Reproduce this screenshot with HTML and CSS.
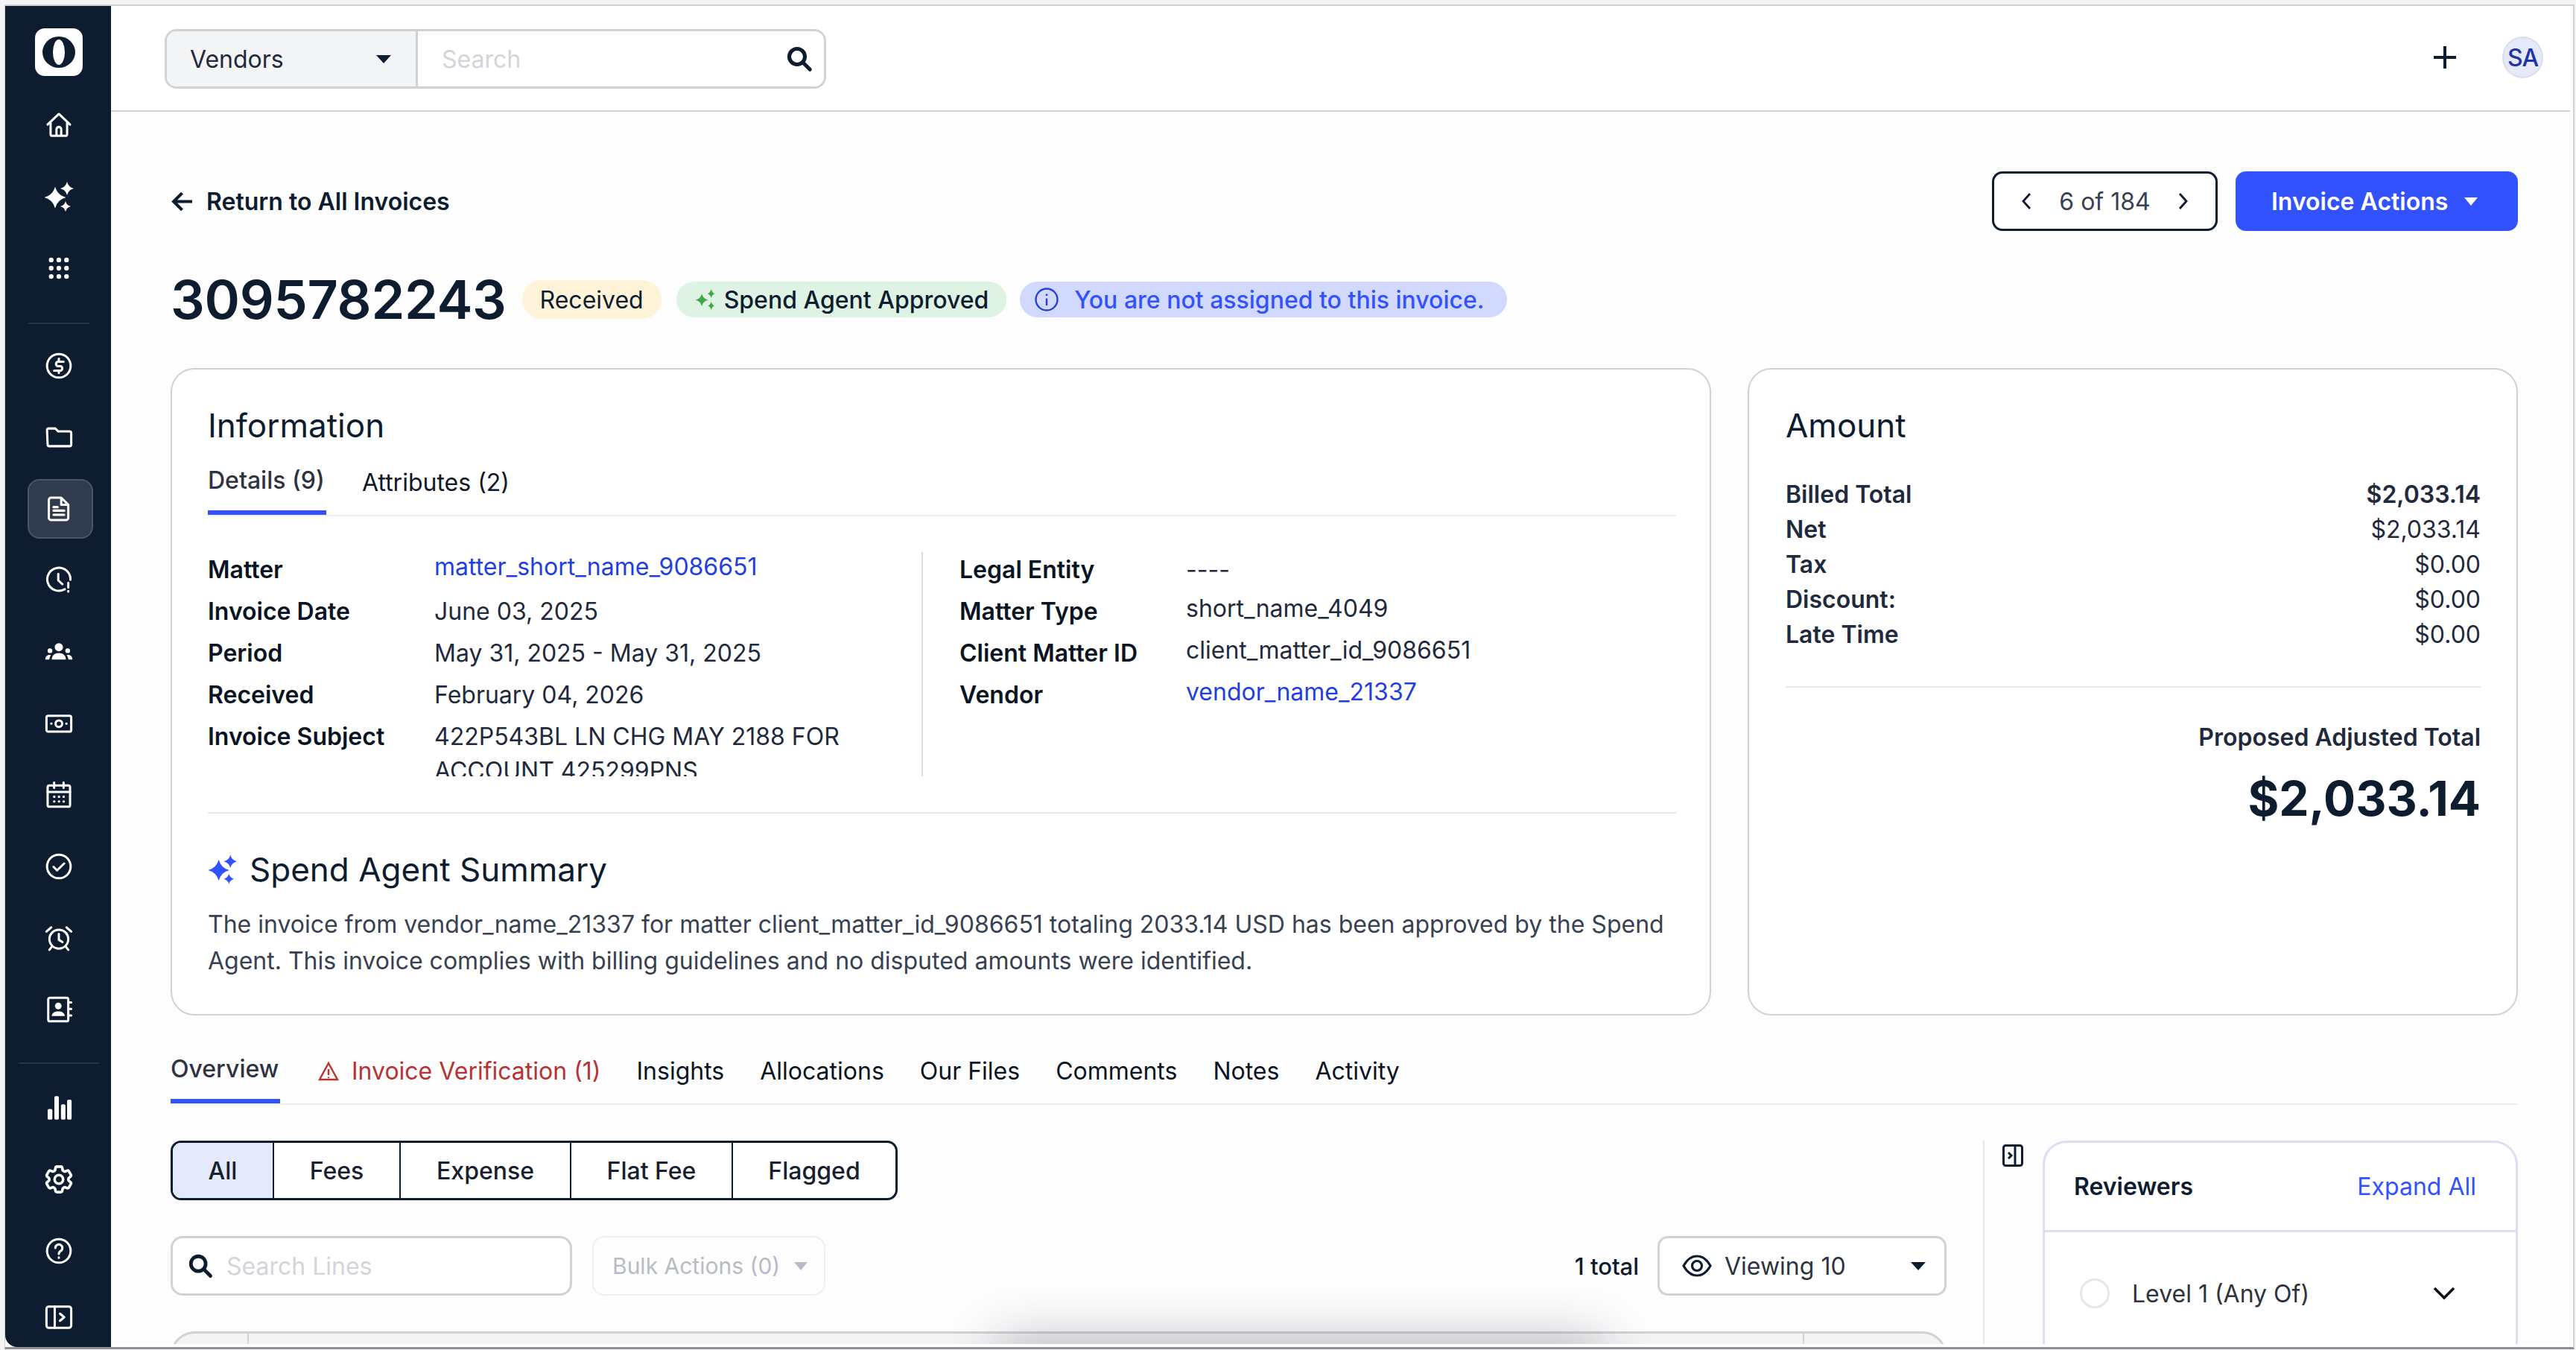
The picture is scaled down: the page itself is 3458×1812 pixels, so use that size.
FILE: index.html
```html
<!DOCTYPE html>
<html lang="en">
<head>
<meta charset="utf-8">
<title>Invoice 3095782243</title>
<link rel="stylesheet" href="styles.css">
</head>
<body>
<div class="window">
  <nav class="sidebar">
    <div class="logo"><svg width="48" height="44" viewBox="0 0 48 44"><ellipse cx="24" cy="22" rx="22" ry="21" fill="#0e1c2f"/><ellipse cx="24" cy="22" rx="8" ry="17" fill="#fff"/></svg></div>
    <a class="nav-item"><svg class="ni" viewBox="0 0 24 24"><path d="M2.500 11.500 12 2.500l9.500 9M5 10v9.500a1.500 1.500 0 0 0 1.500 1.500h11a1.500 1.500 0 0 0 1.500-1.500V10M10 21v-5.500a2 2 0 0 1 4 0V21"/></svg></a>
    <a class="nav-item"><svg class="ni big" viewBox="0 0 40 40"><g class="f"><path d="M15 6.500Q18 18 29.500 21 18 24 15 35.500 12 24 .5 21 12 18 15 6.500Z"/><path d="M31 0Q32.800 7.200 40 9 32.800 10.800 31 18 29.200 10.800 22 9 29.200 7.200 31 0Z"/><path d="M29 26Q30.400 31.600 36 33 30.400 34.400 29 40 27.600 34.400 22 33 27.600 31.600 29 26Z"/></g></svg></a>
    <a class="nav-item"><svg class="ni" viewBox="0 0 24 24"><g class="f"><circle cx="5.500" cy="5" r="2"/><circle cx="12" cy="5" r="2"/><circle cx="18.500" cy="5" r="2"/><circle cx="5.500" cy="12" r="2"/><circle cx="12" cy="12" r="2"/><circle cx="18.500" cy="12" r="2"/><circle cx="5.500" cy="19" r="2"/><circle cx="12" cy="19" r="2"/><circle cx="18.500" cy="19" r="2"/></g></svg></a>
    <div class="nav-sep"></div>
    <a class="nav-item"><svg class="ni" viewBox="0 0 24 24"><circle cx="12" cy="12" r="10"/><path d="M16 8.500h-5a2 2 0 0 0 0 3.800h2.500a2 2 0 0 1 0 3.800H8M12 6v2.500M12 16v2"/></svg></a>
    <a class="nav-item"><svg class="ni" viewBox="0 0 24 24"><path d="M2 6a1.500 1.500 0 0 1 1.500-1.500h5.500l2.500 2.500h9.500a1.500 1.500 0 0 1 1.500 1.500v9.500a1.500 1.500 0 0 1-1.500 1.500h-17a1.500 1.500 0 0 1-1.500-1.500Z"/></svg></a>
    <a class="nav-item active"><svg class="ni" viewBox="0 0 24 24"><path d="M5.500 2.500H14l6 6V19.500a2 2 0 0 1-2 2H5.500a2 2 0 0 1-2-2V4.500a2 2 0 0 1 2-2ZM14 2.500V8.500H20M7.500 10.500h3.500M7.500 13.500h9M7.500 17h9"/></svg></a>
    <a class="nav-item"><svg class="ni" viewBox="0 0 24 24"><path d="M17 19.500A9.800 9.800 0 1 1 21.800 11.500M11.500 6.500v5.500l3.500 3.200M20 14v4M20 21v.4"/></svg></a>
    <a class="nav-item"><svg class="ni" viewBox="0 0 24 24"><g class="f"><circle cx="12" cy="8" r="3.500"/><circle cx="4.500" cy="11" r="2"/><circle cx="19.500" cy="11" r="2"/><path d="M6 18.500c0-3.500 2.500-5.500 6-5.500s6 2 6 5.500ZM0.500 18.500c0-2.500 1.500-4 3.500-4 .5 0 1 .1 1.300.3-.8 1-1.300 2.300-1.300 3.700ZM23.500 18.500c0-2.500-1.500-4-3.500-4-.5 0-1 .1-1.300.3.8 1 1.300 2.300 1.300 3.700Z"/></g></svg></a>
    <a class="nav-item"><svg class="ni" viewBox="0 0 24 24"><rect x="1.500" y="5.500" width="21" height="13.500" rx="1.500"/><circle cx="12" cy="12.200" r="2.800"/><path d="M5.500 12.200h.2M18.300 12.200h.2"/></svg></a>
    <a class="nav-item"><svg class="ni" viewBox="0 0 24 24"><rect x="2.500" y="4" width="19" height="18" rx="1.500"/><path d="M2.500 9.500h19M8 1.500V6M16 1.500V6M8 13.500h.2M12 13.500h.2M16 13.500h.2M8 17.500h.2M12 17.500h.2M16 17.500h.2"/></svg></a>
    <a class="nav-item"><svg class="ni" viewBox="0 0 24 24"><circle cx="12" cy="12" r="10"/><path d="m7.500 12.300 3 3 6-5.800"/></svg></a>
    <a class="nav-item"><svg class="ni" viewBox="0 0 24 24"><circle cx="12" cy="13" r="8"/><path d="M12 8.500V13.500l3 2M1.500 6.500 5.500 3M22.500 6.500 18.500 3M6 19.500l-2 2.500M18 19.500l2 2.500"/></svg></a>
    <a class="nav-item"><svg class="ni" viewBox="0 0 24 24"><path d="M4.500 2h14a1.500 1.500 0 0 1 1.500 1.500v17a1.500 1.500 0 0 1-1.500 1.500h-14a1.500 1.500 0 0 1-1.500-1.500v-17A1.500 1.500 0 0 1 4.500 2ZM20 6h2.500M20 11.500h2.500M20 17h2.500"/><g class="f"><circle cx="11.500" cy="9" r="2.800"/><path d="M6 17.500c0-2.800 2.500-4 5.500-4s5.500 1.200 5.500 4Z"/></g></svg></a>
    <div class="nav-sep lower"></div>
    <a class="nav-item"><svg class="ni" viewBox="0 0 24 24"><g class="f"><rect x="2.500" y="13" width="4" height="9" rx="1.200"/><rect x="8.200" y="2" width="3.800" height="20" rx="1.200"/><rect x="13.800" y="9" width="3.800" height="13" rx="1.200"/><rect x="19" y="5" width="3.800" height="17" rx="1.200"/></g></svg></a>
    <a class="nav-item"><svg class="ni" viewBox="2 2 20 20"><circle cx="12" cy="12" r="3"/><path d="M9.594 3.940c.09-.542.56-.94 1.110-.94h2.593c.55 0 1.020.398 1.110.94l.213 1.281c.063.374.313.686.645.870.074.040.147.083.22.127.325.196.72.257 1.075.124l1.217-.456a1.125 1.125 0 0 1 1.370.49l1.296 2.247a1.125 1.125 0 0 1-.26 1.431l-1.003.827c-.293.241-.438.613-.43.992a7.723 7.723 0 0 1 0 .255c-.008.378.137.75.43.991l1.004.827c.424.35.534.955.26 1.430l-1.298 2.247a1.125 1.125 0 0 1-1.369.491l-1.217-.456c-.355-.133-.75-.072-1.076.124a6.470 6.470 0 0 1-.22.128c-.331.183-.581.495-.644.869l-.213 1.281c-.09.543-.56.94-1.110.94h-2.594c-.55 0-1.019-.398-1.110-.94l-.213-1.281c-.062-.374-.312-.686-.644-.87a6.520 6.520 0 0 1-.22-.127c-.325-.196-.72-.257-1.076-.124l-1.217.456a1.125 1.125 0 0 1-1.369-.49l-1.297-2.247a1.125 1.125 0 0 1 .26-1.431l1.004-.827c.292-.24.437-.613.43-.991a6.932 6.932 0 0 1 0-.255c.007-.38-.138-.751-.43-.992l-1.004-.827a1.125 1.125 0 0 1-.26-1.430l1.297-2.247a1.125 1.125 0 0 1 1.370-.491l1.216.456c.356.133.751.072 1.076-.124.072-.044.146-.086.22-.128.332-.183.582-.495.644-.869l.214-1.280Z"/></svg></a>
    <a class="nav-item"><svg class="ni" viewBox="0 0 24 24"><circle cx="12" cy="12" r="10"/><path d="M9 9.500a3 3 0 1 1 4.500 2.600c-1 .6-1.500 1.200-1.500 2.400M12 17.500v.3"/></svg></a>
    <a class="nav-item last"><svg class="ni" viewBox="0 0 24 24"><rect x="1.500" y="3" width="21" height="18" rx="2"/><path d="M8.500 3v18M13 9l3.500 3-3.500 3"/></svg></a>
  </nav>

  <div class="main">
    <header class="topbar">
      <div class="global-search">
        <div class="scope"><span>Vendors</span><i class="caret"></i></div>
        <div class="search-field"><span class="ph">Search</span>
          <svg class="mag" viewBox="0 0 24 24"><circle cx="10" cy="10" r="7"/><path d="m15.500 15.500 6 6"/></svg></div>
      </div>
      <div class="top-actions">
        <svg class="plus" viewBox="0 0 30 30"><path d="M15 0v30M0 15h30"/></svg>
        <div class="avatar">SA</div>
      </div>
    </header>

    <div class="content">
      <div class="crumb-row">
        <a class="back"><svg viewBox="0 0 28 28"><path d="M27 14H3M14 3 3 14l11 11"/></svg>Return to All Invoices</a>
        <div class="crumb-actions">
          <div class="pager">
            <svg viewBox="0 0 14 22"><path d="M12 1 3 11l9 10"/></svg>
            <span>6 of 184</span>
            <svg viewBox="0 0 14 22"><path d="m2 1 9 10-9 10"/></svg>
          </div>
          <button class="primary">Invoice Actions<i class="caret white"></i></button>
        </div>
      </div>

      <div class="title-row">
        <h1>3095782243</h1>
        <span class="badge yellow">Received</span>
        <span class="badge green"><svg viewBox="0 0 40 40"><path d="M13 9Q15.500 19 25 21 15.500 23 13 33 10.500 23 1 21 10.500 19 13 9Z"/><path d="M31 0Q32.800 7.200 38 9 32.800 10.800 31 17 29.200 10.800 24 9 29.200 7.200 31 0Z"/><path d="M31 24Q32.400 30 37 32 32.400 34 31 40 29.600 34 25 32 29.600 30 31 24Z"/></svg>Spend Agent Approved</span>
        <span class="badge blue"><svg viewBox="0 0 32 32"><circle cx="16" cy="16" r="14.500"/><path d="M16 14.500V24M16 8.500v2.500"/></svg>You are not assigned to this invoice.</span>
      </div>

      <div class="cards">
        <section class="card info">
          <h2>Information</h2>
          <div class="sub-tabs">
            <a class="sub-tab on">Details (9)</a>
            <a class="sub-tab">Attributes (2)</a>
          </div>
          <div class="fields">
            <div class="field-col left">
              <div class="f-label">Matter</div><div class="f-val link up">matter_short_name_9086651</div>
              <div class="f-label">Invoice Date</div><div class="f-val">June 03, 2025</div>
              <div class="f-label">Period</div><div class="f-val">May 31, 2025 - May 31, 2025</div>
              <div class="f-label">Received</div><div class="f-val">February 04, 2026</div>
              <div class="f-label">Invoice Subject</div><div class="f-val wrap">422P543BL LN CHG MAY 2188 FOR ACCOUNT 425299PNS</div>
            </div>
            <div class="field-col right">
              <div class="f-label">Legal Entity</div><div class="f-val">----</div>
              <div class="f-label">Matter Type</div><div class="f-val up">short_name_4049</div>
              <div class="f-label">Client Matter ID</div><div class="f-val up">client_matter_id_9086651</div>
              <div class="f-label">Vendor</div><div class="f-val link up">vendor_name_21337</div>
            </div>
          </div>
          <div class="summary">
            <h2 class="summary-title"><svg viewBox="0 0 40 40"><g fill="#3352ff"><path d="M15 6.500Q18 18 29.500 21 18 24 15 35.500 12 24 .5 21 12 18 15 6.500Z"/><path d="M31 0Q32.800 7.200 40 9 32.800 10.800 31 18 29.200 10.800 22 9 29.200 7.200 31 0Z"/><path d="M29 26Q30.400 31.600 36 33 30.400 34.400 29 40 27.600 34.400 22 33 27.600 31.600 29 26Z"/></g></svg>Spend Agent Summary</h2>
            <p>The invoice from vendor_name_21337 for matter client_matter_id_9086651 totaling 2033.14 USD has been approved by the Spend Agent. This invoice complies with billing guidelines and no disputed amounts were identified.</p>
          </div>
        </section>

        <section class="card amount">
          <h2>Amount</h2>
          <div class="amount-rows">
            <div class="a-row strong"><span>Billed Total</span><span>$2,033.14</span></div>
            <div class="a-row"><b>Net</b><span>$2,033.14</span></div>
            <div class="a-row"><b>Tax</b><span>$0.00</span></div>
            <div class="a-row"><b>Discount:</b><span>$0.00</span></div>
            <div class="a-row"><b>Late Time</b><span>$0.00</span></div>
          </div>
          <div class="adjusted">
            <div class="adj-label">Proposed Adjusted Total</div>
            <div class="adj-value">$2,033.14</div>
          </div>
        </section>
      </div>

      <div class="tabs">
        <a class="tab on">Overview</a>
        <a class="tab warn"><svg viewBox="0 0 28 28"><path d="M14 3 26 25H2ZM14 11v8M14 21.500v1.500"/></svg>Invoice Verification (1)</a>
        <a class="tab">Insights</a>
        <a class="tab">Allocations</a>
        <a class="tab">Our Files</a>
        <a class="tab">Comments</a>
        <a class="tab">Notes</a>
        <a class="tab">Activity</a>
      </div>

      <div class="lower-body">
        <div class="lines">
          <div class="segments">
            <a class="seg on">All</a><a class="seg">Fees</a><a class="seg">Expense</a><a class="seg">Flat Fee</a><a class="seg">Flagged</a>
          </div>
          <div class="toolbar">
            <div class="line-search"><svg class="mag" viewBox="0 0 24 24"><circle cx="10" cy="10" r="7"/><path d="m15.500 15.500 6 6"/></svg><span class="ph">Search Lines</span></div>
            <div class="bulk"><span>Bulk Actions (0)</span><i class="caret grey"></i></div>
            <div class="total">1 total</div>
            <div class="viewing"><svg viewBox="0 0 40 40"><path d="M2 20C7 11 13 7 20 7s13 4 18 13c-5 9-11 13-18 13S7 29 2 20Z"/><circle cx="20" cy="20" r="6.500"/></svg><span>Viewing 10</span><i class="caret"></i></div>
          </div>
          <div class="table-head"><div class="th first"></div><div class="th mid"></div><div class="th end"></div></div>
        </div>
        <aside class="side">
          <svg class="collapse" viewBox="0 0 28 30"><rect x="1.500" y="1.500" width="25" height="27" rx="3"/><path d="M17 1.500v27M8 11l4 4-4 4"/></svg>
          <div class="reviewers">
            <div class="rev-head"><strong>Reviewers</strong><a>Expand All</a></div>
            <div class="rev-row"><i class="radio"></i><span>Level 1 (Any Of)</span><svg viewBox="0 0 32 20"><path d="m3 3 13 13L29 3"/></svg></div>
          </div>
        </aside>
      </div>
      <div class="shadow"></div>
    </div>
  </div>
</div>
</body>
</html>
```
FILE: styles.css
```css
* { box-sizing: border-box; }
html, body { margin: 0; padding: 0; }
body {
  width: 3458px; height: 1812px; overflow: hidden;
  background: #f4f4f5;
  font-family: Inter, "Liberation Sans", sans-serif;
  font-size: 32px; color: #0e1c2f;
}
svg { display: block; flex: none; }
i { display: block; flex: none; }
h1, h2, p { margin: 0; font-weight: 400; }

.window {
  margin: 6px 0 0 6px; width: 3450px; height: 1805px;
  display: flex; overflow: hidden; background: #fff;
  border-top: 2px solid #d1d2d6; border-left: 1px solid #c9cacd;
  border-right: 2px solid #d1d2d6; border-bottom: 3px solid #8d8f93;
}

/* sidebar */
.sidebar {
  width: 142px; flex: none; height: 100%; background: #0e1c2f;
  border-bottom-left-radius: 16px;
  display: flex; flex-direction: column; align-items: center;
  padding: 30px 0 0 2px;
}
.logo {
  width: 64px; height: 64px; background: #fff; border-radius: 13px;
  display: flex; align-items: center; justify-content: center;
  margin-bottom: 26px;
}
.nav-item {
  width: 88px; height: 80px; margin-bottom: 16px;
  display: flex; align-items: center; justify-content: center;
  border: 2px solid transparent; border-radius: 16px; flex: none;
}
.nav-item.active { background: #303c4e; border-color: #4a5565; margin-left: 3px; padding-right: 3px; }
.nav-item.last { margin: -7px 0 0; }
.ni { width: 38px; height: 38px; fill: none; stroke: #fff; stroke-width: 1.9; stroke-linecap: round; stroke-linejoin: round; }
.ni.big { width: 40px; height: 40px; }
.ni .f { fill: #fff; stroke: none; }
.nav-sep { width: 82px; height: 2px; background: #26344a; flex: none; margin: 17px 0 16px; }
.nav-sep.lower { width: 108px; margin: 15px 0 19px; }

/* top bar */
.main { flex: 1; min-width: 0; display: flex; flex-direction: column; padding-right: 4px; }
.topbar {
  height: 142px; flex: none; border-bottom: 2px solid #d1d2d6;
  display: flex; align-items: center; justify-content: space-between;
  padding: 0 36px 2px 72px;
}
.global-search {
  width: 888px; height: 80px; margin-top: 4px; display: flex;
  border: 3px solid #d1d2d6; border-radius: 16px; overflow: hidden;
}
.scope {
  width: 337px; flex: none; background: #f3f4f6; border-right: 3px solid #d1d2d6;
  display: flex; align-items: center; justify-content: space-between;
  padding: 0 33px 0 31px; color: #1f2a3c;
}
.search-field { flex: 1; display: flex; align-items: center; justify-content: space-between; padding: 0 15px 0 32px; background: #fff; }
.ph { color: #d3d5da; }
.mag { width: 36px; height: 36px; fill: none; stroke: #0e1c2f; stroke-width: 3.400; stroke-linecap: round; }
.caret { width: 0; height: 0; border-left: 10px solid transparent; border-right: 10px solid transparent; border-top: 11px solid #0e1c2f; }
.caret.white { border-left-width: 9px; border-right-width: 9px; border-top-color: #fff; }
.caret.grey { border-top-color: #b8bcc6; }
.top-actions { display: flex; align-items: center; gap: 62px; }
.plus { width: 30px; height: 30px; fill: none; stroke: #0e1c2f; stroke-width: 4; }
.avatar {
  width: 55px; height: 56px; border-radius: 50%; background: #e5e9fc; border: 2px solid #dcdde3;
  display: flex; align-items: center; justify-content: center;
  font-size: 32px; font-weight: 500; letter-spacing: -1px; color: #1f33a6;
}

/* page */
.content {
  position: relative; height: 1654px; flex: none; overflow: hidden;
  background: #fdfdfe; padding: 80px 70px 0 80px;
}
.crumb-row { display: flex; align-items: center; justify-content: space-between; height: 80px; }
.back { display: flex; align-items: center; gap: 18px; font-weight: 600; padding-left: 1px; }
.back svg { width: 29px; height: 29px; fill: none; stroke: #0e1c2f; stroke-width: 4; }
.crumb-actions { display: flex; gap: 24px; }
.pager {
  width: 303px; height: 80px; border: 3px solid #0e1c2f; border-radius: 14px; background: #fff;
  display: flex; align-items: center; justify-content: space-between; padding: 0 36px; color: #374151;
}
.pager svg { width: 14px; height: 22px; fill: none; stroke: #0e1c2f; stroke-width: 2.800; }
.primary {
  width: 379px; height: 80px; border: 0; border-radius: 14px; background: #3352ff; color: #fff;
  font: 600 32px Inter, "Liberation Sans", sans-serif;
  display: flex; align-items: center; justify-content: flex-start; gap: 22px; padding: 0 0 0 48px;
}
.title-row { display: flex; align-items: center; height: 90px; margin: 47px 0; gap: 21px; }
h1 { font-size: 72px; font-weight: 600; line-height: 90px; color: #0e1c2f; letter-spacing: -.3px; }
.badge {
  height: 48px; border-radius: 24px; display: flex; align-items: center; padding: 0 24px;
  white-space: nowrap; color: #0e1c2f;
}
.badge.yellow { height: 52px; border-radius: 26px; background: #fff4d9; }
.badge.green { background: #def3e3; gap: 11px; padding: 0 24px 0 25px; margin-left: -1px; font-weight: 500; }
.badge.green svg { width: 28px; height: 28px; fill: #3fa84a; }
.badge.blue { background: #d2d9ff; color: #3352ff; gap: 21px; padding: 0 31px 0 20px; font-weight: 500; margin-left: -3px; }
.badge.blue svg { width: 32px; height: 32px; fill: none; stroke: #2540d8; stroke-width: 2.400; }

.cards { display: flex; gap: 49px; height: 869px; }
.card { border: 2px solid #d1d2d6; border-radius: 32px; background: #fff; }
.info { width: 2068px; flex: none; padding: 47px 45px 0 48px; }
.amount { flex: 1; padding: 47px 48px 0 49px; }
h2 { font-size: 44px; line-height: 56px; color: #0e1c2f; }

.sub-tabs { display: flex; gap: 48px; margin-top: 26px; border-bottom: 2px solid #eceef1; }
.sub-tab { padding: 3px 0 23px; line-height: 40px; color: #111827; }
.sub-tab.on { min-width: 159px; padding: 0 0 20px; border-bottom: 6px solid #3352ff; font-weight: 500; color: #2e3340; }

.fields { display: flex; margin-top: 48px; height: 301px; overflow: hidden; }
.field-col { display: grid; grid-auto-rows: 56px; align-content: start; padding-top: 4px; }
.field-col.left { width: 960px; grid-template-columns: 304px 1fr; border-right: 2px solid #d8dae0; padding-right: 60px; }
.field-col.right { flex: 1; padding-left: 49px; grid-template-columns: 304px 1fr; }
.f-label { line-height: 40px; font-weight: 600; color: #0a1422; white-space: nowrap; }
.f-val { line-height: 40px; color: #1f2a3c; white-space: nowrap; }
.f-val.link { color: #1f3fe0; }
.f-val.up { margin-top: -4px; }
.f-val.wrap { white-space: normal; line-height: 46px; margin-top: -3px; }

.summary { margin-top: 48px; border-top: 2px solid #e5e7eb; padding-top: 47px; }
.summary-title { display: flex; align-items: center; gap: 17px; }
.summary-title svg { width: 39px; height: 40px; }
.summary p { margin-top: 21px; line-height: 49px; color: #374151; }

.amount-rows { margin-top: 41px; }
.a-row { display: flex; justify-content: space-between; height: 47px; line-height: 47px; color: #1f2a3c; }
.a-row b { font-weight: 600; }
.a-row.strong { font-weight: 600; }
.adjusted { margin-top: 46px; border-top: 2px solid #e5e7eb; padding-top: 47px; text-align: right; }
.adj-label { line-height: 40px; font-weight: 600; color: #1f2a3c; }
.adj-value { margin-top: 18px; font-size: 64px; line-height: 88px; font-weight: 700; color: #0e1c2f; }

.tabs { display: flex; gap: 48px; margin-top: 52px; border-bottom: 2px solid #eceef1; }
.tab { padding: 3px 0 23px; line-height: 40px; color: #0a1422; display: flex; align-items: center; gap: 17px; height: 66px; }
.tab.on { min-width: 147px; padding: 0 0 20px; height: 66px; border-bottom: 6px solid #3352ff; font-weight: 500; color: #2e3340; }
.tab.warn { color: #b83232; margin-left: 3px; }
.tab.warn svg { width: 28px; height: 28px; fill: none; stroke: #b83232; stroke-width: 2.400; }

.lower-body { display: flex; margin-top: 48px; height: 280px; }
.lines { width: 2384px; flex: none; }
.segments {
  width: 976px; height: 80px; display: flex; border: 3px solid #0e1c2f; border-radius: 14px; overflow: hidden; background: #fff;
}
.seg { display: flex; align-items: center; justify-content: center; border-right: 2px solid #0e1c2f; font-weight: 500; color: #16202f; }
.seg:nth-child(1) { width: 136px; background: #e5e9fc; }
.seg:nth-child(2) { width: 170px; }
.seg:nth-child(3) { width: 229px; }
.seg:nth-child(4) { width: 217px; }
.seg:nth-child(5) { flex: 1; border-right: 0; }
.toolbar { display: flex; align-items: center; height: 80px; margin-top: 48px; }
.line-search {
  width: 539px; height: 80px; border: 3px solid #d1d2d6; border-radius: 16px; background: #fff;
  display: flex; align-items: center; gap: 18px; padding: 0 20px;
}
.line-search .mag { width: 34px; height: 36px; }
.bulk {
  width: 313px; height: 80px; margin-left: 27px; border: 2px solid #eff0f2; border-radius: 16px;
  display: flex; align-items: center; justify-content: space-between; padding: 0 22px 0 25px; color: #b8bcc6;
  font-size: 30px;
}
.bulk .caret { border-left-width: 9px; border-right-width: 9px; border-top-width: 11px; }
.total { margin-left: auto; font-size: 31px; font-weight: 500; color: #0e1c2f; margin-right: 25px; }
.viewing {
  width: 388px; height: 80px; border: 3px solid #d1d2d6; border-radius: 14px; background: #fff;
  display: flex; align-items: center; padding: 0 25px 0 30px; color: #2e3340;
}
.viewing svg { width: 40px; height: 40px; fill: none; stroke: #0e1c2f; stroke-width: 3.200; margin-right: 17px; }
.viewing .caret { margin-left: auto; }
.table-head {
  display: flex; width: 2384px; height: 60px; margin-top: 48px; background: #f3f4f6;
  border: 3px solid #d1d2d6; border-bottom: 0; border-radius: 32px 32px 0 0;
}
.th.first { width: 102px; border-right: 2px solid #d1d2d6; }
.th.mid { width: 2088px; border-right: 2px solid #d1d2d6; }

.side { display: flex; margin-left: 49px; border-left: 2px solid #e5e7eb; flex: 1; padding: 5px 0 0 24px; gap: 26px; min-width: 0; align-items: flex-start; height: 300px; }
.collapse { width: 28px; height: 30px; fill: none; stroke: #0e1c2f; stroke-width: 3; }
.reviewers {
  flex: 1; margin-top: -5px; height: 300px; background: #fff;
  border: 3px solid #dcdff0; border-bottom: 0; border-radius: 32px 32px 0 0;
}
.rev-head {
  height: 120px; border-bottom: 3px solid #dcdff0; display: flex; align-items: center; justify-content: space-between;
  padding: 0 53px 0 39px;
}
.rev-head strong { font-weight: 600; }
.rev-head a { color: #3352ff; }
.rev-row { display: flex; align-items: center; height: 164px; padding: 0 80px 0 47px; color: #2e3340; }
.radio { width: 40px; height: 40px; border: 3px solid #e6e7ea; border-radius: 50%; margin-right: 30px; }
.rev-row svg { width: 32px; height: 20px; margin-left: auto; fill: none; stroke: #0a0f18; stroke-width: 3.600; }

.shadow {
  position: absolute; left: 1191px; bottom: -60px; width: 810px; height: 60px; pointer-events: none;
  box-shadow: 0 -4px 70px rgba(40,40,50,.32);
}
```
